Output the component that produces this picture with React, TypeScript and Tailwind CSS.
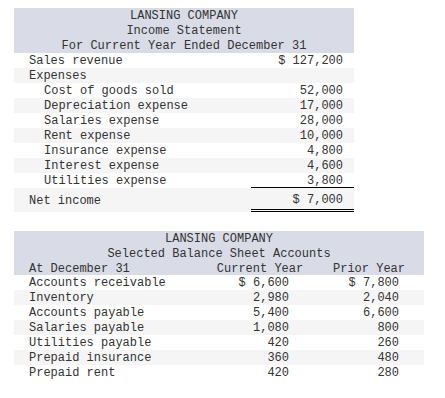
import React from 'react';

interface Line {
  label: string;
  amount: string;
  indent?: boolean;
}

const incomeLines: Line[] = [
  { label: 'Sales revenue', amount: '$ 127,200' },
  { label: 'Expenses', amount: '' },
  { label: 'Cost of goods sold', amount: '52,000', indent: true },
  { label: 'Depreciation expense', amount: '17,000', indent: true },
  { label: 'Salaries expense', amount: '28,000', indent: true },
  { label: 'Rent expense', amount: '10,000', indent: true },
  { label: 'Insurance expense', amount: '4,800', indent: true },
  { label: 'Interest expense', amount: '4,600', indent: true },
  { label: 'Utilities expense', amount: '3,800', indent: true },
];

const balanceLines = [
  { label: 'Accounts receivable', current: '$ 6,600', prior: '$ 7,800' },
  { label: 'Inventory', current: '2,980', prior: '2,040' },
  { label: 'Accounts payable', current: '5,400', prior: '6,600' },
  { label: 'Salaries payable', current: '1,080', prior: '800' },
  { label: 'Utilities payable', current: '420', prior: '260' },
  { label: 'Prepaid insurance', current: '360', prior: '480' },
  { label: 'Prepaid rent', current: '420', prior: '280' },
];

const App: React.FC = () => {
  return (
    <div
      className="min-h-[398px] w-[445px] bg-white pl-[14px] pt-[8px] text-[12px] leading-[15px] text-[#333]"
      style={{ fontFamily: '"Liberation Mono", "DejaVu Sans Mono", monospace' }}
    >
      {/* Income statement */}
      <div className="w-[340px]">
        <div className="h-[45px] bg-[#d9dce6] pt-[1px] text-center">
          <div>LANSING COMPANY</div>
          <div>Income Statement</div>
          <div>For Current Year Ended December 31</div>
        </div>
        {incomeLines.map((line, i) => (
          <div key={line.label} className={`flex h-[15px] ${i % 2 === 1 ? 'bg-[#f5f5f5]' : 'bg-white'}`}>
            <div className={`flex-1 whitespace-pre pt-[1px] ${line.indent ? 'pl-[30px]' : 'pl-[15px]'}`}>{line.label}</div>
            <div
              className={`w-[103px] whitespace-pre pr-[11px] pt-[1px] text-right ${
                i === incomeLines.length - 1 ? 'border-b border-black' : ''
              }`}
            >
              {line.amount}
            </div>
          </div>
        ))}
        <div className="flex h-[24px] bg-[#f5f5f5]">
          <div className="flex flex-1 items-center pl-[15px] pt-[2px]">Net income</div>
          <div className="flex w-[103px] items-start justify-end border-b-[3px] border-double border-black pr-[11px] pt-[5px] whitespace-pre">
            $ 7,000
          </div>
        </div>
      </div>

      {/* Balance sheet accounts */}
      <div className="mt-[19px] w-[410px]">
        <div className="h-[44px] bg-[#d9dce6] pt-[1px]">
          <div className="text-center">LANSING COMPANY</div>
          <div className="text-center">Selected Balance Sheet Accounts</div>
          <div className="flex">
            <div className="w-[186px] pl-[15px]">At December 31</div>
            <div className="w-[120px] text-center">Current Year</div>
            <div className="w-[98px] text-center">Prior Year</div>
          </div>
        </div>
        {balanceLines.map((row, i) => (
          <div key={row.label} className={`flex h-[15px] pt-[1px] ${i % 2 === 1 ? 'bg-[#f5f5f5]' : 'bg-white'}`}>
            <div className="w-[186px] pl-[15px] whitespace-pre">{row.label}</div>
            <div className="w-[120px] pr-[31px] text-right whitespace-pre">{row.current}</div>
            <div className="w-[98px] pr-[19px] text-right whitespace-pre">{row.prior}</div>
          </div>
        ))}
      </div>
    </div>
  );
};

export default App;
